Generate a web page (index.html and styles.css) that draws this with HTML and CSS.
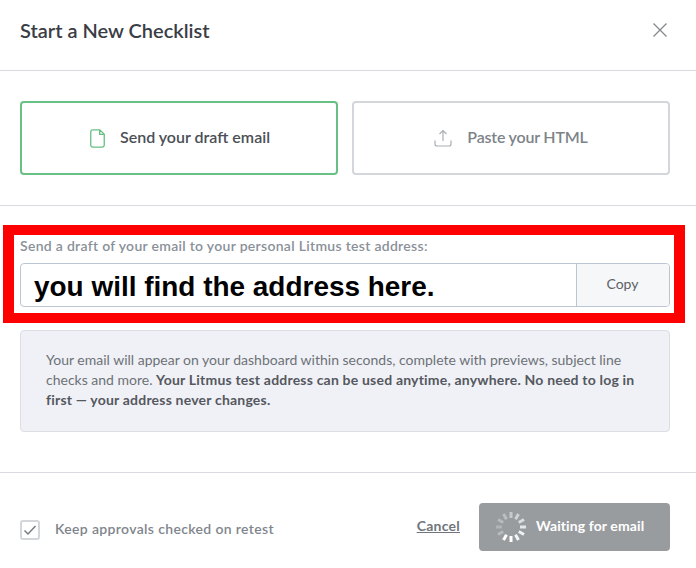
FILE: index.html
```html
<!DOCTYPE html>
<html>
	<head>
		<title>Start a New Checklist</title>
		<link rel="stylesheet" href="styles.css">
	</head>
	<body>
		<div class="modal">
			<div class="modal-header">
				<h1>Start a New Checklist</h1>
				<svg class="close" width="16" height="16" viewBox="0 0 16 16"><path d="M1.5 1.5l13 13M14.500 1.500l-13 13"/></svg>
			</div>
			<div class="options">
				<div class="option active">
					<svg width="15" height="19" viewBox="0 0 16 20"><path d="M3 .8h7.500L15.200 5.500V17a2.200 2.200 0 0 1-2.200 2.200H3A2.200 2.200 0 0 1 .8 17V3A2.200 2.200 0 0 1 3 .8zM10.300 1v4.600h4.700"/></svg>
					<span>Send your draft email</span>
				</div>
				<div class="option">
					<svg width="18" height="18" viewBox="0 0 18 18"><path d="M9 12V1.500M5.500 5L9 1.500 12.500 5M1 11.500V15a2 2 0 0 0 2 2h12a2 2 0 0 0 2-2v-3.500"/></svg>
					<span class="paste">Paste your HTML</span>
				</div>
			</div>
			<div class="address">
				<div class="highlight"></div>
				<label>Send a draft of your email to your personal Litmus test address:</label>
				<div class="address-field">
					<div class="address-value">you will find the address here.</div>
					<div class="copy">Copy</div>
				</div>
				<div class="note">
					Your email will appear on your dashboard within seconds, complete with previews, subject line checks and more. <b>Your Litmus test address can be used anytime, anywhere. No need to log in first — your address never changes.</b>
				</div>
			</div>
			<div class="modal-footer">
				<div class="keep">
					<span class="checkbox"><svg width="14" height="12" viewBox="0 0 14 12"><path d="M1.500 6.500l3.500 3.500 7.500-8"/></svg></span>
					<span>Keep approvals checked on retest</span>
				</div>
				<a class="cancel" href="#">Cancel</a>
				<div class="waiting">
					<svg class="spinner" width="32" height="32" viewBox="0 0 32 32">
						<line x1="16" y1="1" x2="16" y2="7" opacity=".45"/>
						<line x1="16" y1="1" x2="16" y2="7" opacity=".55" transform="rotate(30 16 16)"/>
						<line x1="16" y1="1" x2="16" y2="7" opacity=".65" transform="rotate(60 16 16)"/>
						<line x1="16" y1="1" x2="16" y2="7" opacity=".75" transform="rotate(90 16 16)"/>
						<line x1="16" y1="1" x2="16" y2="7" opacity=".85" transform="rotate(120 16 16)"/>
						<line x1="16" y1="1" x2="16" y2="7" opacity=".9" transform="rotate(150 16 16)"/>
						<line x1="16" y1="1" x2="16" y2="7" opacity="1" transform="rotate(180 16 16)"/>
						<line x1="16" y1="1" x2="16" y2="7" opacity="1" transform="rotate(210 16 16)"/>
						<line x1="16" y1="1" x2="16" y2="7" opacity=".3" transform="rotate(240 16 16)"/>
						<line x1="16" y1="1" x2="16" y2="7" opacity=".25" transform="rotate(270 16 16)"/>
						<line x1="16" y1="1" x2="16" y2="7" opacity=".3" transform="rotate(300 16 16)"/>
						<line x1="16" y1="1" x2="16" y2="7" opacity=".35" transform="rotate(330 16 16)"/>
					</svg>
					<span>Waiting for email</span>
				</div>
			</div>
		</div>
	</body>
</html>
```

FILE: styles.css
```css
html, body {
	margin: 0;
	background: #fff;
}
body {
	font-family: Lato, "Open Sans", sans-serif;
	color: #4b4f56;
}

.modal-header {
	display: flex;
	align-items: center;
	justify-content: space-between;
	height: 60px;
	padding: 0 28px 10px 20px;
	border-bottom: 1px solid #d9dae0;
}
.modal-header h1 {
	margin: 0;
	font-size: 20px;
	font-weight: 600;
	color: #3a3d45;
}
.close path {
	fill: none;
	stroke: #85898e;
	stroke-width: 1.300;
}

.options {
	display: grid;
	grid-template-columns: 1fr 1fr;
	gap: 14px;
	padding: 30px 26px 30px 20px;
	border-bottom: 1px solid #d9dae0;
}
.option {
	display: flex;
	align-items: center;
	justify-content: center;
	gap: 15px;
	height: 74px;
	box-sizing: border-box;
	border: 2px solid #d3d7dc;
	border-radius: 4px;
	font-size: 16px;
	font-weight: 600;
	color: #7d8389;
}
.option span {
	padding-bottom: 4px;
}
.option .paste {
	letter-spacing: -.2px;
}
.option svg {
	fill: none;
	stroke: #a9afb5;
	stroke-width: 1.200;
}
.option.active {
	padding-left: 2px;
	border-color: #68c085;
	color: #4b4f56;
}
.option.active svg {
	stroke: #68c085;
	stroke-width: 1.400;
}

.address {
	position: relative;
	padding: 31px 26px 40px 20px;
	border-bottom: 1px solid #d9dae0;
}
.highlight {
	position: absolute;
	top: 19px;
	left: 3px;
	width: 660px;
	height: 78px;
	border: solid #f00;
	border-width: 10px 11px;
}
.address label {
	display: block;
	height: 26px;
	font-size: 14px;
	line-height: 18px;
	font-weight: 600;
	letter-spacing: .3px;
	color: #8a9099;
}
.address-field {
	display: flex;
	height: 44px;
	box-sizing: border-box;
	border: 1px solid #bcc6d3;
	border-radius: 4px;
	overflow: hidden;
}
.address-value {
	flex: 1;
	padding-left: 13px;
	font-family: "Liberation Sans", Arial, sans-serif;
	font-size: 27.950px;
	font-weight: bold;
	line-height: 45px;
	color: #000;
}
.copy {
	width: 93px;
	padding-right: 1px;
	box-sizing: border-box;
	border-left: 1px solid #bcc6d3;
	background: #f6f7f9;
	font-size: 14px;
	line-height: 40px;
	text-align: center;
	color: #5c6167;
}
.note {
	margin-top: 23px;
	padding: 19px 25px 21px;
	border: 1px solid #dcdee4;
	border-radius: 4px;
	background: #f0f1f6;
	font-size: 14px;
	line-height: 20px;
	color: #6d7177;
}
.note b {
	letter-spacing: .2px;
	color: #55585f;
}

.modal-footer {
	display: flex;
	align-items: center;
	padding: 30px 26px 0 20px;
}
.keep {
	display: flex;
	flex: 1;
	align-items: center;
	gap: 15px;
	margin-top: 6px;
	font-size: 14px;
	font-weight: 600;
	letter-spacing: .35px;
	color: #7f858c;
}
.keep span:last-child {
	padding-bottom: 4px;
}
.checkbox {
	display: flex;
	align-items: center;
	justify-content: center;
	width: 16px;
	height: 16px;
	border: 2px solid #d3d7dc;
	border-radius: 3px;
}
.checkbox path {
	fill: none;
	stroke: #777c82;
	stroke-width: 1.500;
}
.cancel {
	margin-right: 19px;
	padding-bottom: 4px;
	font-size: 14px;
	font-weight: bold;
	letter-spacing: .25px;
	color: #6f757c;
}
.waiting {
	display: flex;
	align-items: center;
	gap: 9px;
	width: 191px;
	height: 48px;
	box-sizing: border-box;
	padding-left: 16px;
	border-radius: 4px;
	background: #999c9f;
	font-size: 14px;
	font-weight: bold;
	letter-spacing: .1px;
	color: #fff;
}
.waiting span {
	padding-bottom: 4px;
}
.spinner line {
	stroke: #fff;
	stroke-width: 3;
}
```
